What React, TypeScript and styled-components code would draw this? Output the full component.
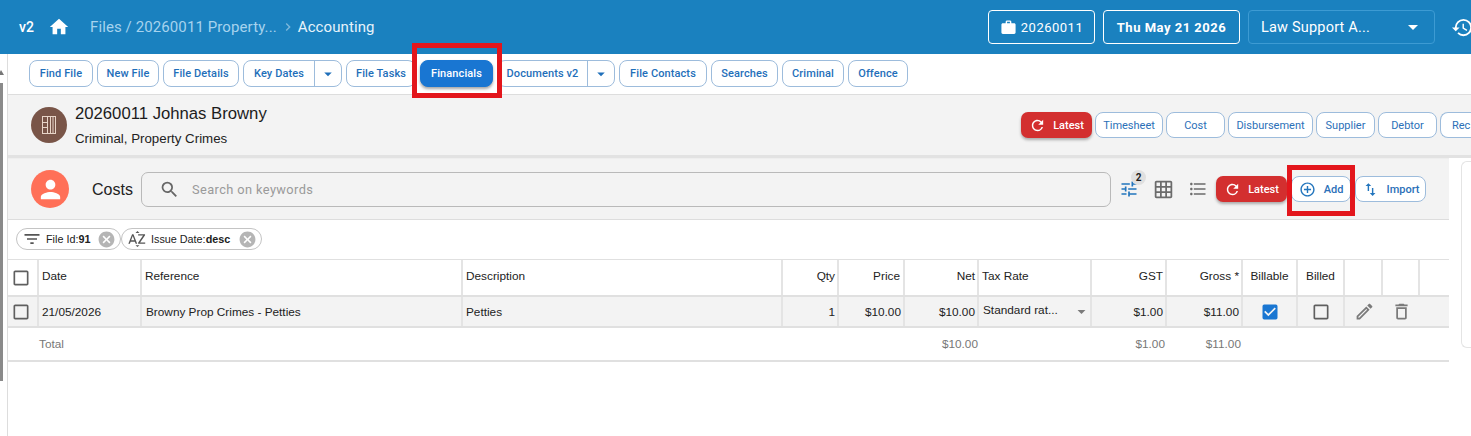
import React from "react";
import styled, { createGlobalStyle } from "styled-components";
import {
  MdHome, MdWork, MdHistory, MdArrowDropDown, MdRefresh, MdSearch, MdTune, MdGridOn,
  MdFormatListBulleted, MdAddCircleOutline, MdImportExport, MdFilterList, MdSortByAlpha,
  MdCancel, MdOutlineEdit, MdDeleteOutline, MdCheckBox, MdCheckBoxOutlineBlank, MdPerson, MdChevronRight,
} from "react-icons/md";

const Global = createGlobalStyle`
  html, body { margin: 0; padding: 0; background: #fff; overflow: hidden; }
  * { box-sizing: border-box; }
  body { font-family: "Liberation Sans", Arial, sans-serif; color: #222; }
`;

const Page = styled.div`
  position: relative;
  width: 1471px;
  height: 436px;
  overflow: hidden;
`;

const Header = styled.header`
  height: 54px;
  background: #1a81bf;
  display: flex;
  align-items: center;
  padding-left: 19px;
  color: #fff;
  font-family: Roboto, sans-serif;
`;
const Version = styled.span`
  font-size: 14px;
  font-weight: 500;
  width: 21px;
`;
const HomeLink = styled.span`
  display: flex;
  width: 42px;
  margin-left: 8px;
  font-size: 22px;
`;
const Crumb = styled.span`
  font-size: 15px;
  letter-spacing: 0.1px;
  color: #a6d3ee;
  white-space: nowrap;
`;
const CrumbSep = styled.span`
  display: flex;
  color: #7db8dc;
  font-size: 16px;
  margin: 0 2px 0 3px;
`;
const CrumbNow = styled(Crumb)`
  color: #e6f3fb;
`;
const HeaderRight = styled.div`
  margin-left: auto;
  display: flex;
  align-items: center;
  gap: 8px;
  margin-right: -3px;
`;
const HeadBtn = styled.div<{ $w: number; $bold?: boolean }>`
  width: ${(p) => p.$w}px;
  height: 34px;
  border: 1px solid #fff;
  border-radius: 4px;
  display: flex;
  align-items: center;
  justify-content: center;
  gap: 4px;
  font-size: 13px;
  letter-spacing: 0.5px;
  font-weight: ${(p) => (p.$bold ? 700 : 400)};
  color: #fff;
  svg { font-size: 17px; }
`;
const HeadSelect = styled.div`
  width: 187px;
  height: 34px;
  border: 1px solid #3d9bd3;
  border-radius: 4px;
  display: flex;
  align-items: center;
  justify-content: space-between;
  padding: 0 9px 0 12px;
  font-size: 14.5px;
  letter-spacing: 0.2px;
  svg { font-size: 24px; }
`;
const HistoryIcon = styled.span`
  display: flex;
  font-size: 23px;
  margin-left: 8px;
  width: 23px;
`;

const Body = styled.div`
  display: flex;
  height: 382px;
`;
const Rail = styled.div`
  width: 8px;
  flex: none;
  padding-top: 16px;
  border-right: 1px solid #ddd;
  display: flex;
  flex-direction: column;
`;
const RailArrow = styled.div`
  width: 0;
  height: 0;
  border-left: 3px solid transparent;
  border-right: 3px solid transparent;
  border-bottom: 5px solid #777;
  margin: 0 0 8px -2px;
`;
const RailBar = styled.div`
  width: 3px;
  height: 298px;
  background: #8a8a8a;
`;
const Main = styled.div`
  flex: 1;
  min-width: 0;
`;

const TabRow = styled.nav`
  height: 40px;
  display: flex;
  align-items: center;
  gap: 4px;
  padding: 0 0 1px 21px;
`;
const Tab = styled.div<{ $w: number; $active?: boolean }>`
  width: ${(p) => p.$w}px;
  height: 27px;
  flex: none;
  border-radius: 8px;
  border: 1px solid ${(p) => (p.$active ? "#1976d2" : "#9dbcdc")};
  background: ${(p) => (p.$active ? "#1976d2" : "#fff")};
  color: ${(p) => (p.$active ? "#fff" : "#1f6fba")};
  box-shadow: ${(p) => (p.$active ? "0 2px 3px rgba(0,0,0,.35)" : "none")};
  display: flex;
  align-items: center;
  justify-content: center;
  font: 500 11px Roboto, sans-serif;
  letter-spacing: 0.1px;
  white-space: nowrap;
`;
const SplitLabel = styled.span`
  flex: 1;
  text-align: center;
`;
const SplitArrow = styled.span`
  width: 27px;
  height: 100%;
  border-left: 1px solid #9dbcdc;
  display: flex;
  align-items: center;
  justify-content: center;
  font-size: 18px;
`;

const FileBar = styled.section`
  height: 61px;
  background: #f3f3f3;
  border-top: 1px solid #ddd;
  display: flex;
  align-items: center;
  padding-left: 23px;
  overflow: hidden;
`;
const FileAvatar = styled.div`
  width: 36px;
  height: 36px;
  border-radius: 50%;
  background: #795548;
  display: flex;
  align-items: center;
  justify-content: center;
  flex: none;
`;
const FileText = styled.div`
  margin-left: 8px;
  width: 400px;
  flex: none;
`;
const FileTitle = styled.div`
  font-size: 16.7px;
  line-height: 20px;
  color: #1c1c1c;
  margin-bottom: 7px;
`;
const FileSub = styled.div`
  font-size: 13.3px;
  line-height: 16px;
  color: #222;
`;
const FileActions = styled.div`
  margin-left: auto;
  display: flex;
  align-items: center;
  gap: 3px;
  flex: none;
  width: 450px;
`;
const Latest = styled.div<{ $w: number }>`
  width: ${(p) => p.$w}px;
  height: 26px;
  flex: none;
  background: #d32f2f;
  border-radius: 7px;
  color: #fff;
  box-shadow: 0 2px 3px rgba(0,0,0,.3);
  display: flex;
  align-items: center;
  justify-content: center;
  gap: 7px;
  font: 500 11px Roboto, sans-serif;
  svg { font-size: 17px; }
`;
const Pill = styled.div<{ $w: number }>`
  width: ${(p) => p.$w}px;
  height: 26px;
  flex: none;
  border: 1px solid #9dbcdc;
  border-radius: 8px;
  background: #fff;
  color: #2b70b8;
  display: flex;
  align-items: center;
  justify-content: center;
  font: 400 11px Roboto, sans-serif;
  white-space: nowrap;
`;
const PillClip = styled(Pill)`
  justify-content: flex-start;
  padding-left: 11px;
  border-right: 0;
  border-radius: 8px 0 0 8px;
`;

const Divider = styled.div`
  height: 3px;
  background: #e2e2e2;
`;

const Content = styled.div`
  display: flex;
`;
const Panel = styled.section`
  width: 1441px;
  flex: none;
`;
const SidePanel = styled.aside`
  width: 20px;
  height: 187px;
  margin: 3px 0 0 12px;
  flex: none;
  border: 1px solid #e4e4e4;
  border-right: 0;
  border-radius: 6px 0 0 6px;
`;
const PanelHead = styled.div`
  height: 62px;
  background: #f3f3f3;
  border-bottom: 1px solid #ddd;
  border-top: 1px solid #eee;
  display: flex;
  align-items: center;
  padding-left: 23px;
`;
const PersonAvatar = styled.div`
  width: 38px;
  height: 38px;
  border-radius: 50%;
  background: #ff7058;
  color: #fff;
  display: flex;
  align-items: center;
  justify-content: center;
  font-size: 29px;
  flex: none;
`;
const PanelTitle = styled.div`
  width: 49px;
  margin: 1px 0 0 23px;
  font-size: 16px;
  color: #222;
  flex: none;
`;
const SearchBox = styled.div`
  width: 970px;
  height: 35px;
  border: 1px solid #b9b9b9;
  border-radius: 7px;
  display: flex;
  align-items: center;
  padding-left: 17px;
  gap: 12px;
  color: #9a9a9a;
  font: 400 12.8px Roboto, sans-serif;
  letter-spacing: 0.4px;
  flex: none;
  svg { font-size: 21px; color: #666; }
`;
const ToolIcon = styled.span<{ $color: string; $ml: number; $size: number }>`
  display: flex;
  position: relative;
  color: ${(p) => p.$color};
  font-size: ${(p) => p.$size}px;
  margin-left: ${(p) => p.$ml}px;
  flex: none;
`;
const Badge = styled.span`
  position: absolute;
  top: -9px;
  right: -7px;
  width: 15px;
  height: 15px;
  border-radius: 50%;
  background: #e0e0e0;
  color: #222;
  display: flex;
  align-items: center;
  justify-content: center;
  font: 700 10px Roboto, sans-serif;
`;
const ActionGroup = styled.div`
  display: flex;
  align-items: center;
  gap: 4px;
  margin-left: 8px;
`;
const IconPill = styled(Pill)`
  gap: 8px;
  color: #2b70b8;
  font-weight: 500;
  svg { color: #2275bd; flex: none; }
`;

const ChipRow = styled.div`
  height: 39px;
  display: flex;
  align-items: center;
  padding: 0 0 1px 8px;
  background: #fff;
`;
const Chip = styled.div<{ $w: number }>`
  width: ${(p) => p.$w}px;
  height: 22px;
  border: 1px solid #c4c4c4;
  border-radius: 11px;
  display: flex;
  align-items: center;
  padding: 0 2px 0 5px;
  font-size: 10.8px;
  color: #222;
  white-space: nowrap;
  flex: none;
`;
const ChipIcon = styled.span`
  display: flex;
  font-size: 20px;
  color: #555;
  margin-right: 4px;
`;
const ChipValue = styled.b`
  font-weight: 700;
`;
const ChipClose = styled.span`
  margin: 0 2px 0 auto;
  display: flex;
  font-size: 19px;
  color: #b5b5b5;
`;

const Table = styled.div`
  border-top: 1px solid #e0e0e0;
  border-bottom: 2px solid #e0e0e0;
  font-size: 11.8px;
`;
const columns = "31px 103px 321px 320px 56px 66px 74px 113px 75px 76px 55px 47px 38px 37px 29px";
const Row = styled.div<{ $h: number; $shaded?: boolean }>`
  display: grid;
  grid-template-columns: ${columns};
  height: ${(p) => p.$h}px;
  background: ${(p) => (p.$shaded ? "#f3f3f3" : "#fff")};
  border-bottom: 2px solid #e0e0e0;
`;
const TotalRow = styled(Row)`
  border-bottom: 0;
  color: #777;
`;
const Cell = styled.div<{ $align?: string; $pad?: number; $noline?: boolean }>`
  display: flex;
  align-items: center;
  justify-content: ${(p) => p.$align || "flex-start"};
  padding-right: ${(p) => (p.$align === "flex-end" ? `${p.$pad ?? 2}px` : "3px")};
  padding-left: ${(p) => (p.$align === "flex-end" ? "3px" : `${p.$pad ?? 3}px`)};
  border-right: ${(p) => (p.$noline ? "0" : "2px solid #e4e4e4")};
  white-space: nowrap;
  min-width: 0;
`;
const HeadText = styled.span`
  margin-bottom: 3px;
`;
const Box = styled.span<{ $on?: boolean }>`
  display: flex;
  font-size: 20px;
  color: ${(p) => (p.$on ? "#1976d2" : "#5f5f5f")};
`;
const ActionIcon = styled.span`
  display: flex;
  font-size: 21px;
  color: #7a7a7a;
`;
const SelectCell = styled.div`
  flex: 1;
  display: flex;
  align-items: center;
  justify-content: space-between;
  margin-top: -3px;
  svg { font-size: 19px; color: #7a7a7a; margin: 3px -4px 0 0; }
`;

const Callout = styled.div<{ $x: number; $y: number; $w: number; $h: number }>`
  position: absolute;
  left: ${(p) => p.$x}px;
  top: ${(p) => p.$y}px;
  width: ${(p) => p.$w}px;
  height: ${(p) => p.$h}px;
  border: 5px solid #e3161c;
  pointer-events: none;
`;

const FileGlyph = () => (
  <svg width="20" height="22" viewBox="0 0 20 22" fill="none" stroke="#e8d5c8" strokeWidth="1">
    <rect x="3.5" y="2.5" width="13" height="17" />
    <path d="M8.5 2.5v17M11.5 2.5v17M14 2.5v17" />
    <rect x="3.5" y="8.5" width="5" height="5" />
  </svg>
);

const Dropdown = () => <MdArrowDropDown />;

export default function App() {
  return (
    <Page>
      <Global />
      <Header>
        <Version>v2</Version>
        <HomeLink><MdHome /></HomeLink>
        <Crumb>Files / 20260011 Property...</Crumb>
        <CrumbSep><MdChevronRight /></CrumbSep>
        <CrumbNow>Accounting</CrumbNow>
        <HeaderRight>
          <HeadBtn $w={107}><MdWork />20260011</HeadBtn>
          <HeadBtn $w={137} $bold>Thu May 21 2026</HeadBtn>
          <HeadSelect>Law Support A...<Dropdown /></HeadSelect>
          <HistoryIcon><MdHistory /></HistoryIcon>
        </HeaderRight>
      </Header>
      <Body>
        <Rail><RailArrow /><RailBar /></Rail>
        <Main>
          <TabRow>
            <Tab $w={64}>Find File</Tab>
            <Tab $w={62}>New File</Tab>
            <Tab $w={76}>File Details</Tab>
            <Tab $w={99}><SplitLabel>Key Dates</SplitLabel><SplitArrow><Dropdown /></SplitArrow></Tab>
            <Tab $w={70}>File Tasks</Tab>
            <Tab $w={73} $active>Financials</Tab>
            <Tab $w={118}><SplitLabel>Documents v2</SplitLabel><SplitArrow><Dropdown /></SplitArrow></Tab>
            <Tab $w={88}>File Contacts</Tab>
            <Tab $w={67}>Searches</Tab>
            <Tab $w={62}>Criminal</Tab>
            <Tab $w={60}>Offence</Tab>
          </TabRow>
          <FileBar>
            <FileAvatar><FileGlyph /></FileAvatar>
            <FileText>
              <FileTitle>20260011 Johnas Browny</FileTitle>
              <FileSub>Criminal, Property Crimes</FileSub>
            </FileText>
            <FileActions>
              <Latest $w={71}><MdRefresh />Latest</Latest>
              <Pill $w={68}>Timesheet</Pill>
              <Pill $w={59}>Cost</Pill>
              <Pill $w={85}>Disbursement</Pill>
              <Pill $w={59}>Supplier</Pill>
              <Pill $w={59}>Debtor</Pill>
              <PillClip $w={31}>Rec</PillClip>
            </FileActions>
          </FileBar>
          <Divider />
          <Content>
            <Panel>
              <PanelHead>
                <PersonAvatar><MdPerson /></PersonAvatar>
                <PanelTitle>Costs</PanelTitle>
                <SearchBox><MdSearch />Search on keywords</SearchBox>
                <ToolIcon $color="#2275bd" $ml={8} $size={20}><MdTune /><Badge>2</Badge></ToolIcon>
                <ToolIcon $color="#6b6b6b" $ml={14} $size={21}><MdGridOn /></ToolIcon>
                <ToolIcon $color="#6b6b6b" $ml={14} $size={20}><MdFormatListBulleted /></ToolIcon>
                <ActionGroup>
                  <Latest $w={71}><MdRefresh />Latest</Latest>
                  <IconPill $w={60}><MdAddCircleOutline size={17} />Add</IconPill>
                  <IconPill $w={71}><MdImportExport size={17} />Import</IconPill>
                </ActionGroup>
              </PanelHead>
              <ChipRow>
                <Chip $w={105}>
                  <ChipIcon><MdFilterList /></ChipIcon>
                  <span>File Id:<ChipValue>91</ChipValue></span>
                  <ChipClose><MdCancel /></ChipClose>
                </Chip>
                <Chip $w={141}>
                  <ChipIcon><MdSortByAlpha /></ChipIcon>
                  <span>Issue Date:<ChipValue>desc</ChipValue></span>
                  <ChipClose><MdCancel /></ChipClose>
                </Chip>
              </ChipRow>
              <Table>
                <Row $h={37}>
                  <Cell $pad={3}><Box><MdCheckBoxOutlineBlank /></Box></Cell>
                  <Cell><HeadText>Date</HeadText></Cell>
                  <Cell><HeadText>Reference</HeadText></Cell>
                  <Cell><HeadText>Description</HeadText></Cell>
                  <Cell $align="flex-end"><HeadText>Qty</HeadText></Cell>
                  <Cell $align="flex-end" $pad={3}><HeadText>Price</HeadText></Cell>
                  <Cell $align="flex-end"><HeadText>Net</HeadText></Cell>
                  <Cell><HeadText>Tax Rate</HeadText></Cell>
                  <Cell $align="flex-end"><HeadText>GST</HeadText></Cell>
                  <Cell $align="flex-end"><HeadText>Gross *</HeadText></Cell>
                  <Cell $align="center"><HeadText>Billable</HeadText></Cell>
                  <Cell $align="center"><HeadText>Billed</HeadText></Cell>
                  <Cell />
                  <Cell />
                  <Cell $noline />
                </Row>
                <Row $h={31} $shaded>
                  <Cell $pad={3}><Box><MdCheckBoxOutlineBlank /></Box></Cell>
                  <Cell $pad={3}>21/05/2026</Cell>
                  <Cell $pad={4}>Browny Prop Crimes - Petties</Cell>
                  <Cell $pad={3}>Petties</Cell>
                  <Cell $align="flex-end">1</Cell>
                  <Cell $align="flex-end">$10.00</Cell>
                  <Cell $align="flex-end">$10.00</Cell>
                  <Cell $pad={4}><SelectCell>Standard rat...<Dropdown /></SelectCell></Cell>
                  <Cell $align="flex-end">$1.00</Cell>
                  <Cell $align="flex-end">$11.00</Cell>
                  <Cell $align="center"><Box $on><MdCheckBox /></Box></Cell>
                  <Cell $align="center"><Box><MdCheckBoxOutlineBlank /></Box></Cell>
                  <Cell $align="center" $noline><ActionIcon><MdOutlineEdit /></ActionIcon></Cell>
                  <Cell $align="center" $noline><ActionIcon><MdDeleteOutline /></ActionIcon></Cell>
                  <Cell $noline />
                </Row>
                <TotalRow $h={32}>
                  <Cell $noline />
                  <Cell $noline $pad={0}>Total</Cell>
                  <Cell $noline />
                  <Cell $noline />
                  <Cell $noline />
                  <Cell $noline />
                  <Cell $noline $align="flex-end" $pad={1}>$10.00</Cell>
                  <Cell $noline />
                  <Cell $noline $align="flex-end" $pad={2}>$1.00</Cell>
                  <Cell $noline $align="flex-end" $pad={2}>$11.00</Cell>
                  <Cell $noline />
                  <Cell $noline />
                  <Cell $noline />
                  <Cell $noline />
                  <Cell $noline />
                </TotalRow>
              </Table>
            </Panel>
            <SidePanel />
          </Content>
        </Main>
      </Body>
      <Callout $x={412} $y={43} $w={90} $h={55} />
      <Callout $x={1287} $y={165} $w={68} $h={51} />
    </Page>
  );
}
